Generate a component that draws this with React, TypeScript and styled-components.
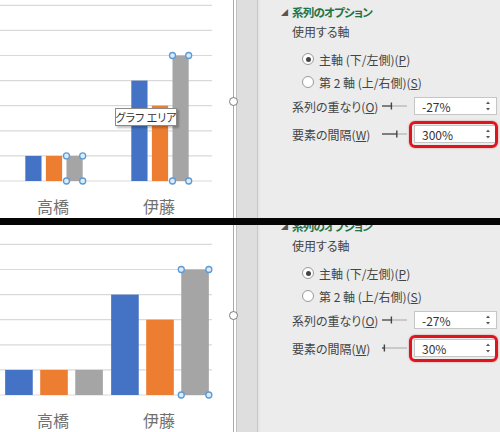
import React from 'react';
import styled, { createGlobalStyle } from 'styled-components';

const GlobalStyle = createGlobalStyle`
  html, body {
    margin: 0;
    padding: 0;
    background: #fff;
    overflow: hidden;
  }
  body {
    font-family: "Noto Sans CJK JP", "Noto Sans", sans-serif;
    font-feature-settings: "palt";
  }
`;

const series = [
  { color: '#4472c4', values: [1, 4] },
  { color: '#ed7d31', values: [1, 3] },
  { color: '#a5a5a5', values: [1, 5] },
];
const categories = ['高橋', '伊藤'];

const BASE = 181;
const UNIT = 25.1;
const CAT_W = 106;
const OVERLAP = 0.27;

type ChartProps = {
  gapWidth: number;
  handles: number[];
};

const Chart = ({ gapWidth, handles }: ChartProps) => {
  const w = CAT_W / (3 + 2 * OVERLAP + gapWidth);
  const stride = w * (1 + OVERLAP);

  return (
    <svg width="233" height="232" viewBox="0 0 233 232">
      {Array.from({ length: 8 }, (_, v) => (
        <line
          key={v}
          x1="0"
          x2="212"
          y1={BASE - v * UNIT}
          y2={BASE - v * UNIT}
          stroke="#d9d9d9"
          strokeWidth="1.2"
        />
      ))}
      {categories.map((name, c) => {
        const start = c * CAT_W + (gapWidth * w) / 2 + 1;
        return (
          <g key={name}>
            {series.map((s, i) => {
              const x = start + i * stride;
              const y = BASE - s.values[c] * UNIT;
              return <rect key={i} x={x} y={y} width={w} height={BASE - y} fill={s.color} />;
            })}
            {handles.includes(c) &&
              (() => {
                const x = start + 2 * stride;
                const y = BASE - series[2].values[c] * UNIT;
                return [
                  [x, y],
                  [x + w, y],
                  [x, BASE],
                  [x + w, BASE],
                ].map(([hx, hy], k) => (
                  <circle key={k} cx={hx} cy={hy} r="3" fill="#dceafa" stroke="#5b9bd5" strokeWidth="1.3" />
                ));
              })()}
            <text
              x={c * CAT_W + CAT_W / 2}
              y="213"
              textAnchor="middle"
              fontSize="16"
              fill="#707070"
              fontFamily='"Noto Sans CJK JP", sans-serif'
            >
              {name}
            </text>
          </g>
        );
      })}
    </svg>
  );
};

const Slider = ({ pos }: { pos: number }) => {
  const x = 1 + pos * 23;
  return (
    <SliderBox width="25" height="10" viewBox="0 0 25 10">
      <line x1="0" x2="25" y1="5" y2="5" stroke="#a6a6a6" strokeWidth="1" />
      <line x1="0" x2={x} y1="5" y2="5" stroke="#555" strokeWidth="1.3" />
      <line x1={x} x2={x} y1="1.5" y2="8.5" stroke="#444" strokeWidth="1.4" />
    </SliderBox>
  );
};

const Spinner = () => (
  <SpinIcon width="6" height="12" viewBox="0 0 6 12">
    <path d="M3 1.5 L5 4 L1 4 Z" fill="#555" />
    <path d="M3 10.5 L5 8 L1 8 Z" fill="#555" />
  </SpinIcon>
);

type ShotProps = {
  height: number;
  scroll: number;
  gapWidth: number;
  gapValue: string;
  handles: number[];
  tooltip?: boolean;
};

const Shot = ({ height, scroll, gapWidth, gapValue, handles, tooltip }: ShotProps) => (
  <Frame $height={height}>
    <Content $scroll={scroll}>
      <ChartPane>
        <Chart gapWidth={gapWidth} handles={handles} />
        {tooltip && <Tooltip>グラフ エリア</Tooltip>}
      </ChartPane>
      <Splitter>
        <ResizeHandle />
      </Splitter>
      <Panel>
        <Title>
          <Caret>◢</Caret>
          <span>系列のオプション</span>
        </Title>
        <Label>使用する軸</Label>
        <RadioGroup>
          <RadioRow>
            <Radio $checked />
            <span>
              主軸 (下/左側)(<U>P</U>)
            </span>
          </RadioRow>
          <RadioRow>
            <Radio />
            <span>
              第 2 軸 (上/右側)(<U>S</U>)
            </span>
          </RadioRow>
        </RadioGroup>
        <SpinRow>
          <RowLabel>
            系列の重なり(<U>O</U>)
          </RowLabel>
          <Slider pos={0.365} />
          <SpinField>
            -27%
            <Spinner />
          </SpinField>
        </SpinRow>
        <SpinRow $gap={10}>
          <RowLabel>
            要素の間隔(<U>W</U>)
          </RowLabel>
          <Slider pos={gapWidth / 5} />
          <SpinField>
            {gapValue}
            <Spinner />
            <Highlight />
          </SpinField>
        </SpinRow>
      </Panel>
    </Content>
  </Frame>
);

export default function App() {
  return (
    <Page>
      <GlobalStyle />
      <Shot height={218} scroll={0} gapWidth={3} gapValue="300%" handles={[0, 1]} tooltip />
      <Divider />
      <Shot height={207} scroll={11} gapWidth={0.3} gapValue="30%" handles={[1]} />
    </Page>
  );
}

const Page = styled.div`
  width: 500px;
  height: 432px;
  display: flex;
  flex-direction: column;
  overflow: hidden;
`;

const Frame = styled.div<{ $height: number }>`
  height: ${p => p.$height}px;
  overflow: hidden;
  flex-shrink: 0;
`;

const Content = styled.div<{ $scroll: number }>`
  display: flex;
  height: 232px;
  margin-top: ${p => -p.$scroll}px;
`;

const Divider = styled.div`
  height: 7px;
  background: #050505;
  flex-shrink: 0;
`;

const ChartPane = styled.div`
  position: relative;
  width: 233px;
  flex-shrink: 0;
  background: #fff;
`;

const Tooltip = styled.div`
  position: absolute;
  left: 115px;
  top: 108px;
  width: 62px;
  height: 18px;
  box-sizing: border-box;
  display: flex;
  align-items: center;
  justify-content: center;
  background: #fff;
  border: 1px solid #8a8a8a;
  box-shadow: 2px 2px 2px rgba(0, 0, 0, 0.25);
  font-size: 11px;
  color: #333;
  white-space: nowrap;
`;

const Splitter = styled.div`
  position: relative;
  width: 27px;
  flex-shrink: 0;
  background: linear-gradient(
    to right,
    #a9a9a9 0 1px,
    #fff 1px 3px,
    #c2c2c2 3px 4px,
    #dedede 4px 24px,
    #c8c8c8 24px 25px,
    #e6e6e6 25px 27px
  );
`;

const ResizeHandle = styled.div`
  position: absolute;
  left: -4px;
  top: 97px;
  width: 9px;
  height: 9px;
  box-sizing: border-box;
  border-radius: 50%;
  border: 1px solid #7a7a7a;
  background: #fff;
`;

const Panel = styled.div`
  flex: 1;
  background: #ececec;
  padding: 4px 3px 0 32px;
  color: #444;
  font-size: 12px;
`;

const Title = styled.div`
  display: flex;
  align-items: center;
  line-height: 16px;
  font-size: 11.5px;
  font-weight: 700;
  color: #217346;
  letter-spacing: -0.8px;
`;

const Caret = styled.span`
  width: 10px;
  margin-left: -11px;
  margin-right: 1px;
  font-size: 7px;
  color: #555;
`;

const Label = styled.div`
  margin-top: 4px;
  line-height: 16px;
`;

const RadioGroup = styled.div`
  margin-top: 10px;
  padding-left: 10px;
  display: flex;
  flex-direction: column;
  gap: 5px;
`;

const RadioRow = styled.div`
  height: 18px;
  display: flex;
  align-items: center;
  gap: 5px;
  white-space: nowrap;
`;

const Radio = styled.span<{ $checked?: boolean }>`
  width: 12px;
  height: 12px;
  box-sizing: border-box;
  border-radius: 50%;
  border: 1px solid #9a9a9a;
  background: #fff;
  display: flex;
  align-items: center;
  justify-content: center;

  &::after {
    content: '';
    width: 5px;
    height: 5px;
    border-radius: 50%;
    background: ${p => (p.$checked ? '#444' : 'transparent')};
  }
`;

const U = styled.span`
  text-decoration: underline;
`;

const SpinRow = styled.div<{ $gap?: number }>`
  margin-top: ${p => p.$gap ?? 6}px;
  height: 18px;
  display: flex;
  align-items: center;
`;

const RowLabel = styled.span`
  width: 90px;
  white-space: nowrap;
`;

const SliderBox = styled.svg`
  display: block;
  margin-right: 7px;
`;

const SpinField = styled.div`
  position: relative;
  width: 83px;
  height: 18px;
  box-sizing: border-box;
  border: 1px solid #c6c6c6;
  background: #fff;
  padding-left: 7px;
  display: flex;
  align-items: center;
  font-size: 12px;
  color: #333;
`;

const SpinIcon = styled.svg`
  position: absolute;
  right: 5px;
  top: 2px;
`;

const Highlight = styled.div`
  position: absolute;
  top: -5px;
  right: -2px;
  bottom: -6px;
  left: -6px;
  border: 3px solid #e0141c;
  border-radius: 6px;
  box-shadow: 0 0 2px rgba(180, 0, 0, 0.45);
`;
